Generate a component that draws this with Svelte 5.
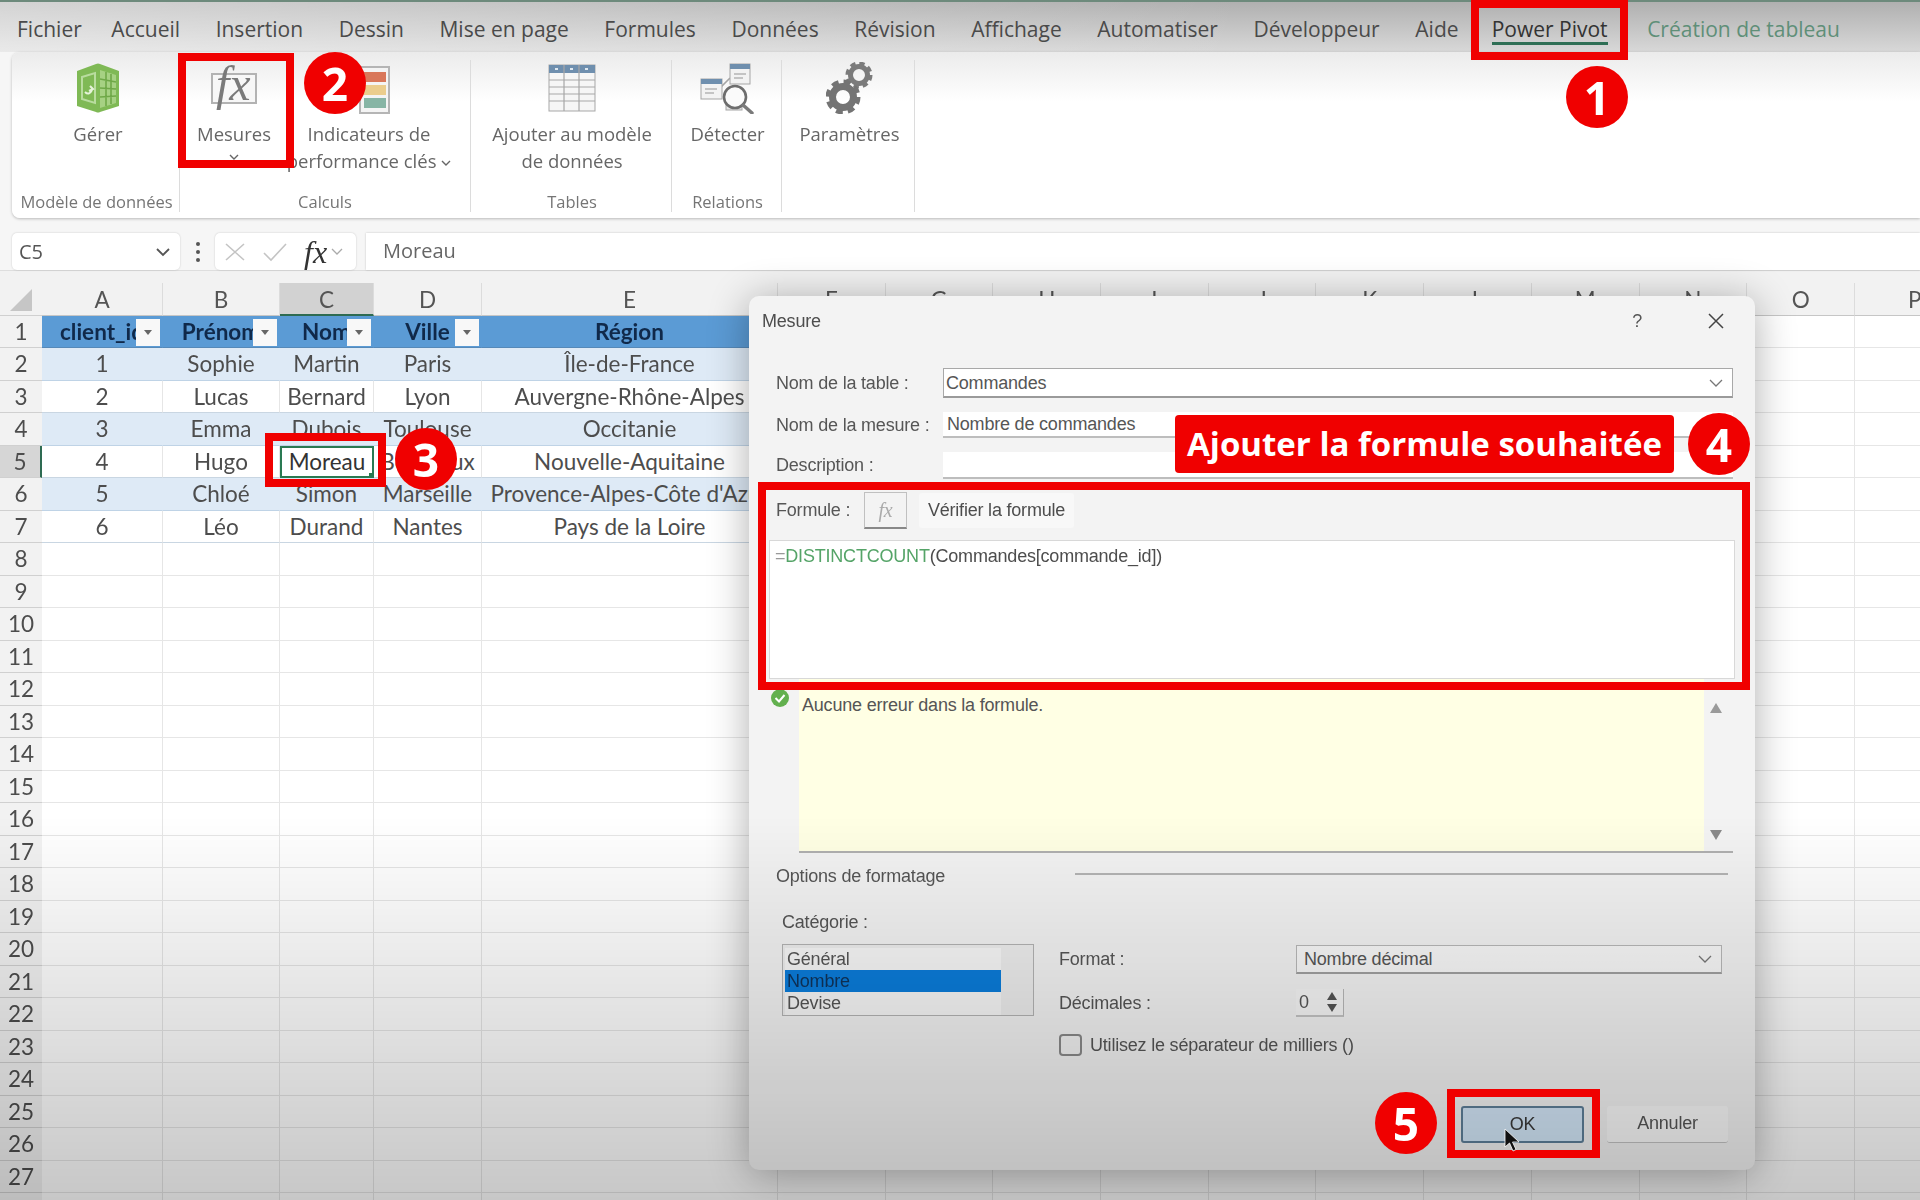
<script lang="ts">
	const tabs = ['Fichier', 'Accueil', 'Insertion', 'Dessin', 'Mise en page', 'Formules', 'Données', 'Révision', 'Affichage', 'Automatiser', 'Développeur', 'Aide'];
	const letters = ['A', 'B', 'C', 'D', 'E', 'F', 'G', 'H', 'I', 'J', 'K', 'L', 'M', 'N', 'O', 'P'];
	const clients = [
		['client_id', 'Prénom', 'Nom', 'Ville', 'Région'],
		['1', 'Sophie', 'Martin', 'Paris', 'Île-de-France'],
		['2', 'Lucas', 'Bernard', 'Lyon', 'Auvergne-Rhône-Alpes'],
		['3', 'Emma', 'Dubois', 'Toulouse', 'Occitanie'],
		['4', 'Hugo', 'Moreau', 'Bordeaux', 'Nouvelle-Aquitaine'],
		['5', 'Chloé', 'Simon', 'Marseille', "Provence-Alpes-Côte d'Azur"],
		['6', 'Léo', 'Durand', 'Nantes', 'Pays de la Loire']
	];
	const rows = Array.from({ length: 28 }, (_, i) => i + 1);
	const cols = letters.map((_, i) => i);

	const cellText = (row: number, col: number) => (row <= 7 && col < 5 ? clients[row - 1][col] : '');
	const cellClass = (row: number, col: number) => {
		const parts = ['cell'];
		if (col < 5 && row === 1) parts.push('thead');
		else if (col < 5 && row <= 7) parts.push(row % 2 === 0 ? 'band' : 'plain');
		if (row === 5 && col === 2) parts.push('active');
		return parts.join(' ');
	};
</script>

<div class="screen">
	<div class="base">
		<nav class="tabs">
			{#each tabs as tab}
				<span>{tab}</span>
			{/each}
			<span class="current">Power Pivot</span>
			<span class="context">Création de tableau</span>
		</nav>

		<section class="ribbon">
			<div class="group g1">
				<div class="items">
					<div class="item">
						<svg width="48" height="52" viewBox="0 0 48 52">
							<path d="M3 9 L22 2 Q24 1 26 2 L45 9 V44 L26 50 Q24 51 22 50 L3 44 Z" fill="#7fb955" />
							<path d="M26 8 L42 13 V41 L26 46 Z" fill="#a6d183" />
							<path d="M26 17 L42 20 M26 26 L42 27 M26 35 L42 34 M32 10 V44 M37 12 V42" stroke="#6fa848" stroke-width="1.6" fill="none" />
							<path d="M8 15 L21 11 V41 L8 37 Z" fill="none" stroke="#b9dc9f" stroke-width="2" />
							<path d="M11 30 Q15 34 18 28 M16 24 L19 27 L15 29" fill="none" stroke="#e6f3da" stroke-width="2" />
						</svg>
						<span class="lbl">Gérer</span>
					</div>
				</div>
				<span class="glabel">Modèle de données</span>
			</div>
			<div class="group g2">
				<div class="items">
					<div class="item measures">
						<div class="fx-icon"><span>fx</span></div>
						<span class="lbl">Mesures</span>
						<svg class="chev" width="10" height="6" viewBox="0 0 10 6"><path d="M1 1 L5 5 L9 1" /></svg>
					</div>
					<div class="item kpi">
						<svg width="48" height="52" viewBox="0 0 48 52">
							<rect x="15" y="5" width="29" height="46" fill="#f4f4f4" stroke="#b5b5b5" stroke-width="2" />
							<rect x="19" y="10" width="22" height="10" fill="#d9775a" />
							<rect x="19" y="23" width="22" height="10" fill="#ebcd8d" />
							<rect x="19" y="36" width="22" height="10" fill="#87b5a5" />
						</svg>
						<span class="lbl">Indicateurs de<br />performance clés <svg class="chev" width="10" height="6" viewBox="0 0 10 6"><path d="M1 1 L5 5 L9 1" /></svg></span>
					</div>
				</div>
				<span class="glabel">Calculs</span>
			</div>
			<div class="group g3">
				<div class="items">
					<div class="item">
						<svg width="48" height="52" viewBox="0 0 48 52">
							<rect x="1" y="3" width="46" height="46" fill="#f6f6f6" stroke="#a7a7a7" />
							<rect x="1" y="3" width="46" height="8" fill="#6f8fae" />
							<path d="M16 3 V49 M31 3 V49 M1 18 H47 M1 25 H47 M1 32 H47 M1 39 H47" stroke="#a7a7a7" stroke-width="1.2" />
							<path d="M7 7 H10 M22 7 H25 M37 7 H40" stroke="#dfe8f0" stroke-width="2" />
						</svg>
						<span class="lbl">Ajouter au modèle<br />de données</span>
					</div>
				</div>
				<span class="glabel">Tables</span>
			</div>
			<div class="group g4">
				<div class="items">
					<div class="item">
						<svg width="54" height="52" viewBox="0 0 54 52">
							<path d="M20 26 L30 16 M33 40 H44" stroke="#a5a5a5" stroke-width="1.6" />
							<rect x="1" y="17" width="21" height="20" fill="#f3f3f3" stroke="#a5a5a5" />
							<rect x="1" y="17" width="21" height="5" fill="#6f8fae" />
							<rect x="30" y="2" width="20" height="20" fill="#f3f3f3" stroke="#a5a5a5" />
							<rect x="30" y="2" width="20" height="5" fill="#6f8fae" />
							<path d="M5 27 H17 M5 31 H14 M34 12 H46 M34 16 H43" stroke="#b5b5b5" stroke-width="1.4" />
							<rect x="26" y="41" width="16" height="7" fill="#e6e6e6" stroke="#a5a5a5" />
							<circle cx="35" cy="35" r="11" fill="#fafafa" stroke="#6d6d6d" stroke-width="2.6" />
							<path d="M43 43 L52 51" stroke="#7a7a7a" stroke-width="3.4" stroke-linecap="round" />
						</svg>
						<span class="lbl">Détecter</span>
					</div>
				</div>
				<span class="glabel">Relations</span>
			</div>
			<div class="group g5">
				<div class="items">
					<div class="item">
						<svg width="48" height="52" viewBox="0 0 48 52">
							<circle cx="33" cy="13" r="8.5" fill="none" stroke="#7b7b7b" stroke-width="5" />
							<circle cx="33" cy="13" r="11.5" fill="none" stroke="#7b7b7b" stroke-width="4" stroke-dasharray="5.2 3.83" />
							<circle cx="17" cy="35" r="10.5" fill="none" stroke="#747474" stroke-width="7" />
							<circle cx="17" cy="35" r="15" fill="none" stroke="#747474" stroke-width="5" stroke-dasharray="6.8 5" />
						</svg>
						<span class="lbl">Paramètres</span>
					</div>
				</div>
			</div>
		</section>

		<div class="formula-bar">
			<div class="namebox">
				<span>C5</span>
				<svg width="16" height="10" viewBox="0 0 16 10"><path d="M2 2 L8 8 L14 2" fill="none" stroke="#555" stroke-width="1.8" /></svg>
			</div>
			<div class="dots"><i></i><i></i><i></i></div>
			<div class="fxbox">
				<svg width="22" height="20" viewBox="0 0 22 20"><path d="M2 2 L20 18 M20 2 L2 18" stroke="#c4c4c4" stroke-width="1.6" /></svg>
				<svg width="26" height="20" viewBox="0 0 26 20"><path d="M2 11 L9 18 L24 2" fill="none" stroke="#c4c4c4" stroke-width="1.6" /></svg>
				<span class="fxglyph">fx</span>
				<svg width="12" height="8" viewBox="0 0 12 8"><path d="M1 1 L6 6 L11 1" fill="none" stroke="#aaa" stroke-width="1.3" /></svg>
			</div>
			<div class="fxinput">Moreau</div>
		</div>

		<div class="sheet">
			<div class="corner">
				<svg width="24" height="24" viewBox="0 0 24 24"><path d="M23 1 V23 H1 Z" fill="#c6c6c6" /></svg>
			</div>
			{#each letters as letter, i}
				<div class="colhead" class:sel={i === 2}>{letter}</div>
			{/each}
			{#each rows as row}
				<div class="rowhead" class:sel={row === 5}>{row < 28 ? row : ''}</div>
				{#each cols as col}
					<div class={cellClass(row, col)}>
						<span class="txt">{cellText(row, col)}</span>
						{#if row === 1 && col < 4}
							<span class="filter"><i></i></span>
						{/if}
						{#if row === 5 && col === 2}
							<i class="handle"></i>
						{/if}
					</div>
				{/each}
			{/each}
		</div>

		<section class="dialog">
			<header class="dlg-title">
				<span>Mesure</span>
				<span class="dlg-help">?</span>
				<svg width="18" height="18" viewBox="0 0 18 18"><path d="M2 2 L16 16 M16 2 L2 16" stroke="#444" stroke-width="1.5" /></svg>
			</header>

			<div class="form">
				<span>Nom de la table :</span>
				<div class="field f1">
					Commandes
					<svg class="down" width="14" height="9" viewBox="0 0 14 9"><path d="M1 1 L7 7 L13 1" /></svg>
				</div>
				<span>Nom de la mesure :</span>
				<div class="field f2">Nombre de commandes</div>
				<span>Description :</span>
				<div class="field f3"></div>
			</div>

			<div class="formula-row">
				<span class="flabel">Formule :</span>
				<div class="fxbtn">fx</div>
				<div class="check-btn">Vérifier la formule</div>
			</div>
			<div class="formula-area">=<b>DISTINCTCOUNT</b><em>(Commandes[commande_id])</em></div>

			<div class="result">
				<svg class="ok-icon" width="18" height="18" viewBox="0 0 18 18">
					<circle cx="9" cy="9" r="9" fill="#62b04e" />
					<path d="M4.5 9 L8 12.5 L13.5 6" fill="none" stroke="#fff" stroke-width="2" />
				</svg>
				<div class="yellow">Aucune erreur dans la formule.</div>
				<div class="scroll">
					<svg width="14" height="12" viewBox="0 0 14 12"><path d="M7 1 L13 11 H1 Z" fill="#9a9a9a" /></svg>
					<svg width="14" height="12" viewBox="0 0 14 12"><path d="M7 11 L13 1 H1 Z" fill="#8a8a8a" /></svg>
				</div>
			</div>

			<div class="options"><span>Options de formatage</span><i></i></div>
			<div class="cat-label">Catégorie :</div>

			<div class="format">
				<div class="listbox">
					<div class="list">
						<span>Général</span>
						<span class="picked">Nombre</span>
						<span>Devise</span>
					</div>
				</div>
				<div class="format-right">
					<span>Format :</span>
					<div class="field f4">
						Nombre décimal
						<svg class="down" width="14" height="9" viewBox="0 0 14 9"><path d="M1 1 L7 7 L13 1" /></svg>
					</div>
					<span>Décimales :</span>
					<div class="spin">
						<span>0</span>
						<div class="spin-arrows">
							<svg width="10" height="8" viewBox="0 0 10 8"><path d="M5 0 L10 8 H0 Z" fill="#555" /></svg>
							<svg width="10" height="8" viewBox="0 0 10 8"><path d="M5 8 L10 0 H0 Z" fill="#555" /></svg>
						</div>
					</div>
					<label class="thousands"><i></i>Utilisez le séparateur de milliers ()</label>
				</div>
			</div>

			<div class="buttons">
				<div class="btn ok">OK</div>
				<div class="btn">Annuler</div>
			</div>
		</section>
	</div>

	<div class="frame fr1"></div>
	<div class="frame fr2"></div>
	<div class="frame fr3"></div>
	<div class="frame fr4"></div>
	<div class="frame fr5"></div>
	<div class="badge b1">1</div>
	<div class="badge b2">2</div>
	<div class="badge b3">3</div>
	<div class="badge b4">4</div>
	<div class="badge b5">5</div>
	<div class="callout">Ajouter la formule souhaitée</div>
	<svg class="cursor" width="18" height="24" viewBox="0 0 18 24"><path d="M1 1 L1 19 L5.5 15 L9 23 L12 21.5 L8.5 14 L15 14 Z" fill="#111" stroke="#fff" stroke-width="0.8" /></svg>
</div>

<style>
	:global(body) {
		margin: 0;
	}

	.screen {
		position: relative;
		width: 1920px;
		height: 1200px;
		overflow: hidden;
		background: #f6f6f6;
		font-family: 'Open Sans', sans-serif;
		color: #555;
	}

	.base {
		position: relative;
		width: 100%;
		height: 100%;
		filter: blur(0.6px);
	}

	/* the recording darkens towards the bottom of the frame */
	.base::after {
		content: '';
		position: absolute;
		inset: 0;
		background: linear-gradient(180deg, rgba(0, 0, 0, 0) 68%, rgba(0, 0, 0, 0.22) 100%);
		pointer-events: none;
	}

	.tabs {
		display: flex;
		align-items: center;
		gap: 35.6px;
		box-sizing: border-box;
		height: 52px;
		padding: 3px 0 0 17px;
		border-top: 2px solid #6d8a7c;
		background:
			linear-gradient(90deg, rgba(255, 255, 255, 0.45), rgba(255, 255, 255, 0) 65%),
			linear-gradient(180deg, #b0b0b0, #d8d8d8);
		font-size: 21px;
		color: #4a4a4a;
		white-space: nowrap;
	}

	.tabs span:first-child {
		margin-right: -6px;
	}

	.current {
		margin-top: 4px;
		margin-left: -2.5px;
		color: #333;
		border-bottom: 3px solid #2f6f55;
		line-height: 26px;
	}

	.context {
		margin-left: 4px;
		color: #5f8f78;
	}

	.ribbon {
		display: flex;
		height: 166px;
		margin-left: 12px;
		border-radius: 8px 0 0 8px;
		background: linear-gradient(180deg, #ebebeb, #ffffff 30%);
		box-shadow: 0 1px 3px rgba(0, 0, 0, 0.25);
	}

	.group {
		display: flex;
		flex-direction: column;
		align-items: center;
		box-sizing: border-box;
		height: 152px;
		margin-top: 8px;
		border-right: 1px solid #dcdcdc;
	}

	.g1 { width: 168px; padding-left: 2px; }
	.g2 { width: 291px; }
	.g3 { width: 201px; padding-left: 2px; }
	.g4 { width: 110px; padding-left: 2px; }
	.g5 { width: 133px; padding-left: 3px; }

	.items {
		display: flex;
		flex: 1;
		justify-content: center;
		gap: 4px;
		padding-top: 2px;
	}

	.g1 .items {
		padding-left: 3px;
	}

	.item {
		display: flex;
		flex-direction: column;
		align-items: center;
		height: 130px;
		text-align: center;
	}

	.lbl {
		margin-top: 6px;
		font-size: 18.5px;
		line-height: 27px;
		color: #666;
		white-space: nowrap;
	}

	.chev {
		vertical-align: 2px;
	}

	.chev path {
		fill: none;
		stroke: #666;
		stroke-width: 1.4;
	}

	.measures {
		width: 82px;
		padding-left: 2px;
	}

	.measures .chev {
		margin-top: 7px;
	}

	.kpi {
		width: 180px;
	}

	.fx-icon {
		position: relative;
		box-sizing: border-box;
		width: 46px;
		height: 31px;
		margin: 11px 0 10px;
		border: 2px solid #b3b3b3;
		background: #f7f7f7;
	}

	.fx-icon span {
		position: absolute;
		left: 3px;
		top: -21px;
		font: italic 48px/60px 'Liberation Serif', serif;
		color: #7a7a7a;
	}

	.glabel {
		margin-top: -1px;
		font-size: 16.5px;
		line-height: 22px;
		color: #757575;
		white-space: nowrap;
	}

	.formula-bar {
		display: flex;
		align-items: stretch;
		height: 37px;
		margin-top: 15px;
		padding-left: 12px;
	}

	.namebox,
	.fxbox,
	.fxinput {
		box-sizing: border-box;
		background: #fff;
		box-shadow: 0 0 2px rgba(0, 0, 0, 0.2);
	}

	.namebox {
		display: flex;
		align-items: center;
		justify-content: space-between;
		width: 168px;
		padding: 0 9px 0 7px;
		border-radius: 5px;
		font-size: 20px;
	}

	.dots {
		display: flex;
		flex-direction: column;
		align-items: center;
		justify-content: center;
		gap: 4px;
		width: 35px;
	}

	.dots i {
		width: 4px;
		height: 4px;
		border-radius: 50%;
		background: #555;
	}

	.fxbox {
		display: flex;
		align-items: center;
		width: 141px;
		padding-left: 9px;
		gap: 16px;
		border-radius: 5px;
	}

	.fxglyph {
		font: italic 32px/30px 'Liberation Serif', serif;
		color: #333;
	}

	.fxglyph + svg {
		margin-left: -12px;
	}

	.fxinput {
		flex: 1;
		margin-left: 10px;
		padding-left: 17px;
		font-size: 20px;
		line-height: 36px;
		color: #666;
	}

	.sheet {
		display: grid;
		grid-template-columns: 42px 121px 117px 94px 108px 296px repeat(9, 107.7px) 108px 120px;
		grid-auto-rows: 32.5px;
		box-sizing: border-box;
		margin-top: 0;
		padding-top: 12px;
		border-top: 1px solid #dedede;
		background: linear-gradient(180deg, #f2f2f2, #f2f2f2 44px, transparent 44px);
		font-family: Lato, sans-serif;
		font-size: 22.5px;
		color: #555;
	}

	.corner {
		display: flex;
		align-items: flex-end;
		justify-content: center;
		padding-bottom: 3px;
		box-sizing: border-box;
		border-bottom: 1px solid #d0d0d0;
	}

	.colhead {
		text-align: center;
		line-height: 33px;
		border-right: 1px solid #dcdcdc;
		border-bottom: 1px solid #c6c6c6;
		box-sizing: border-box;
	}

	.colhead.sel {
		background: #d2d2d2;
		border-bottom: 2px solid #2e6b52;
	}

	.rowhead {
		text-align: center;
		line-height: 32px;
		box-sizing: border-box;
		border-bottom: 1px solid #d0d0d0;
		background: #f2f2f2;
		color: #4d4d4d;
	}

	.rowhead.sel {
		background: #d6d6d6;
		border-right: 2px solid #2e6b52;
	}

	.cell {
		position: relative;
		display: flex;
		justify-content: center;
		align-items: center;
		box-sizing: border-box;
		background: #fff;
		border-right: 1px solid #e6e6e6;
		border-bottom: 1px solid #e6e6e6;
		white-space: nowrap;
		overflow: hidden;
		color: #4d4d4d;
	}

	.cell.thead {
		background: #5b9bd5;
		border-right-color: #5b9bd5;
		border-bottom-color: #5689b8;
		font-weight: 700;
		color: #10294a;
		overflow: hidden;
	}

	.cell.band {
		background: #deeaf6;
		border-right-color: #deeaf6;
		border-bottom-color: #bfd3e6;
	}

	.cell.plain {
		border-bottom-color: #c9d6e2;
	}

	.cell.active {
		border: 2px solid #2a7a52;
		overflow: visible;
		color: #333;
	}

	.handle {
		position: absolute;
		right: -3px;
		bottom: -3px;
		width: 6px;
		height: 6px;
		background: #2a7a52;
	}

	.filter {
		position: absolute;
		right: 2px;
		top: 3px;
		display: flex;
		align-items: center;
		justify-content: center;
		width: 24px;
		height: 27px;
		background: #f8f8f8;
	}

	.filter i {
		width: 0;
		height: 0;
		border-left: 4px solid transparent;
		border-right: 4px solid transparent;
		border-top: 5px solid #666;
	}

	.dialog {
		position: absolute;
		left: 749px;
		top: 296px;
		box-sizing: border-box;
		width: 1006px;
		height: 874px;
		padding: 0 27px;
		border-radius: 10px;
		background: #f3f3f3;
		box-shadow: 0 4px 40px rgba(0, 0, 0, 0.32);
		font-family: 'Liberation Sans', sans-serif;
		font-size: 18px;
		letter-spacing: -0.2px;
		color: #565656;
		white-space: nowrap;
	}

	.dlg-title {
		display: flex;
		align-items: center;
		height: 50px;
		margin-left: -14px;
		margin-right: 3px;
	}

	.dlg-title span:first-child {
		flex: 1;
		color: #4d4d4d;
	}

	.dlg-help {
		margin-right: 65px;
	}

	.form {
		display: grid;
		grid-template-columns: 167px 790px;
		grid-template-rows: 30px 26px 27px;
		row-gap: 14px;
		align-items: center;
		margin-top: 22px;
	}

	.field {
		position: relative;
		box-sizing: border-box;
		height: 100%;
		padding: 0 4px;
		display: flex;
		align-items: center;
		background: #fff;
		border-bottom: 2px solid #bdbdbd;
	}

	.f1 {
		padding: 2px 4px 0 2px;
		border: 1px solid #a8a8a8;
		border-bottom: 2px solid #9a9a9a;
	}

	.down {
		position: absolute;
		right: 9px;
		top: calc(50% - 4px);
	}

	.down path {
		fill: none;
		stroke: #777;
		stroke-width: 1.3;
	}

	.formula-row {
		display: flex;
		align-items: center;
		height: 37px;
		margin-top: 13px;
	}

	.flabel {
		width: 88px;
	}

	.fxbtn {
		box-sizing: border-box;
		width: 43px;
		height: 37px;
		margin-right: 12px;
		border: 1px solid #c0c0c0;
		border-bottom: 2px solid #888;
		text-align: center;
		font: italic 20px/35px 'Liberation Serif', serif;
		color: #aaa;
	}

	.check-btn {
		width: 155px;
		height: 35px;
		line-height: 35px;
		text-align: center;
		background: #f8f8f8;
		border-radius: 3px;
		color: #4d4d4d;
	}

	.formula-area {
		box-sizing: border-box;
		height: 139px;
		margin: 11px -7px 0 -7px;
		padding: 4px 5px;
		border: 1px solid #d8d8d8;
		background: #fff;
		color: #999;
		line-height: 22px;
	}

	.formula-area b {
		font-weight: 400;
		color: #55a468;
	}

	.formula-area em {
		font-style: normal;
		color: #4d4d4d;
	}

	.result {
		position: relative;
		display: flex;
		height: 174px;
		margin-right: -5px;
		margin-left: 23px;
		border-bottom: 2px solid #b0b0b0;
		box-sizing: border-box;
	}

	.ok-icon {
		position: absolute;
		left: -28px;
		top: 10px;
	}

	.yellow {
		box-sizing: border-box;
		width: 905px;
		padding: 15px 3px;
		background: #ffffe4;
		line-height: 22px;
		color: #555;
	}

	.scroll {
		display: flex;
		flex: 1;
		flex-direction: column;
		align-items: center;
		justify-content: space-between;
		padding: 23px 5px 10px 0;
	}

	.options {
		display: flex;
		height: 24px;
		margin-top: 11px;
	}

	.options span {
		width: 299px;
		line-height: 24px;
	}

	.options i {
		width: 654px;
		height: 2px;
		margin-top: 9px;
		background: #b4b4b4;
	}

	.cat-label {
		margin: 22px 0 0 6px;
		height: 24px;
		line-height: 24px;
	}

	.format {
		display: flex;
		gap: 25px;
		margin: 10px 0 0 6px;
	}

	.listbox {
		box-sizing: border-box;
		width: 252px;
		height: 72px;
		padding: 3px 32px 0 2px;
		border: 1px solid #b4b4b4;
		background: #eeeeee;
	}

	.list {
		display: flex;
		flex-direction: column;
		height: 100%;
		background: #f8f8f8;
	}

	.list span {
		height: 22px;
		line-height: 22px;
		padding-left: 2px;
	}

	.list .picked {
		background: #0b7ddb;
		color: #10335a;
	}

	.format-right {
		display: grid;
		grid-template-columns: 237px 426px;
		grid-template-rows: 29px 28px 24px;
		row-gap: 15px;
		align-items: center;
		padding-top: 1px;
	}

	.f4 {
		padding-left: 7px;
		background: #f8f8f8;
		border: 1px solid #b8b8b8;
		border-bottom: 2px solid #a0a0a0;
	}

	.spin {
		display: flex;
		justify-content: space-between;
		align-items: center;
		box-sizing: border-box;
		width: 48px;
		height: 28px;
		padding: 0 6px 0 3px;
		background: #f6f6f6;
		border-right: 1px solid #b8b8b8;
		border-bottom: 2px solid #c4c4c4;
	}

	.spin-arrows {
		display: flex;
		flex-direction: column;
		gap: 4px;
	}

	.thousands {
		grid-column: 1 / 3;
		align-self: end;
		display: flex;
		align-items: center;
		gap: 8px;
	}

	.thousands i {
		box-sizing: border-box;
		width: 23px;
		height: 22px;
		border: 2px solid #8a8a8a;
		border-radius: 4px;
	}

	.buttons {
		display: flex;
		justify-content: flex-end;
		gap: 23px;
		margin-top: 50px;
	}

	.btn {
		box-sizing: border-box;
		width: 121px;
		height: 37px;
		line-height: 35px;
		text-align: center;
		background: #fafafa;
		border-radius: 3px;
		border-bottom: 1px solid #c4c4c4;
	}

	.btn.ok {
		width: 123px;
		background: #d5e9fb;
		border: 2px solid #5f809a;
		line-height: 33px;
		color: #3a3a3a;
	}

	.frame {
		position: absolute;
		box-sizing: border-box;
		border: 8px solid #f00000;
	}

	.fr1 { left: 1471px; top: 0; width: 157px; height: 60px; }
	.fr2 { left: 178px; top: 53px; width: 116px; height: 115px; }
	.fr3 { left: 265px; top: 433px; width: 121px; height: 54px; }
	.fr4 { left: 758px; top: 482px; width: 992px; height: 208px; }
	.fr5 { left: 1447px; top: 1089px; width: 153px; height: 69px; }

	.badge {
		position: absolute;
		width: 62px;
		height: 62px;
		border-radius: 50%;
		background: #f00000;
		color: #fff;
		font-family: 'Open Sans', sans-serif;
		font-weight: 700;
		font-size: 46px;
		line-height: 62px;
		text-align: center;
	}

	.b1 { left: 1566px; top: 66px; }
	.b2 { left: 304px; top: 52px; }
	.b3 { left: 395px; top: 428px; }
	.b4 { left: 1688px; top: 413px; }
	.b5 { left: 1375px; top: 1092px; }

	.callout {
		position: absolute;
		left: 1175px;
		top: 415px;
		width: 499px;
		height: 58px;
		border-radius: 4px;
		background: #f00000;
		color: #fff;
		font-family: 'Open Sans', sans-serif;
		font-weight: 700;
		font-size: 33px;
		line-height: 58px;
		text-align: center;
		white-space: nowrap;
	}

	.cursor {
		position: absolute;
		left: 1504px;
		top: 1128px;
	}
</style>
